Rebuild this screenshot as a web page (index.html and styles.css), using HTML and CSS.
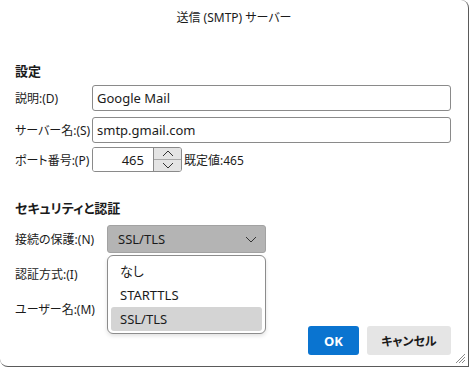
FILE: index.html
```html
<!DOCTYPE html>
<html lang="ja">
  <head>
    <meta charset="UTF-8" />
    <title>送信 (SMTP) サーバー</title>
    <link rel="stylesheet" href="styles.css">
  </head>
  <body>
    <div class="dialog">
      <div class="title">送信 (SMTP) サーバー</div>

      <div class="content">
        <div class="section-head first">設定</div>

        <div class="row r1">
          <label class="label">説明:(D)</label>
          <input class="field" type="text" value="Google Mail" />
        </div>
        <div class="row r2">
          <label class="label">サーバー名:(S)</label>
          <input class="field" type="text" value="smtp.gmail.com" />
        </div>
        <div class="row r3">
          <label class="label">ポート番号:(P)</label>
          <div class="port">
            <input class="field port-input" type="text" value="465" />
            <div class="spin">
              <div class="spin-btn">
                <svg width="12" height="7" viewBox="0 0 12 7"><path d="M1 6 L6 1 L11 6" fill="none" stroke="#333" stroke-width="1"/></svg>
              </div>
              <div class="spin-btn">
                <svg width="12" height="7" viewBox="0 0 12 7"><path d="M1 1 L6 6 L11 1" fill="none" stroke="#333" stroke-width="1"/></svg>
              </div>
            </div>
          </div>
          <span class="default">既定値:465</span>
        </div>

        <div class="section-head second">セキュリティと認証</div>

        <div class="row r4">
          <label class="label wide">接続の保護:(N)</label>
          <div class="select-wrap">
            <div class="select">
              <span>SSL/TLS</span>
              <svg width="12" height="7" viewBox="0 0 12 7"><path d="M1 1 L6 6 L11 1" fill="none" stroke="#333" stroke-width="1"/></svg>
            </div>
            <div class="menu">
              <div class="menu-item">なし</div>
              <div class="menu-item">STARTTLS</div>
              <div class="menu-item selected">SSL/TLS</div>
            </div>
          </div>
        </div>
        <div class="row r5">
          <label class="label">認証方式:(I)</label>
        </div>
        <div class="row r6">
          <label class="label">ユーザー名:(M)</label>
        </div>

        <div class="buttons">
          <button class="btn ok">OK</button>
          <button class="btn cancel">キャンセル</button>
        </div>
      </div>

      <svg class="grip" width="12" height="12" viewBox="0 0 12 12">
        <path d="M11 2 L2 11 M11 5 L5 11 M11 8 L8 11" stroke="#8a8a8a" stroke-width="1"/>
      </svg>
    </div>
  </body>
</html>
```

FILE: styles.css
```css
body {
  margin: 0;
  background: #fff;
  font-family: "Noto Sans", "Noto Sans CJK JP", sans-serif;
  font-size: 12px;
  color: #1b1b1b;
  font-feature-settings: "palt";
}

.dialog {
  position: relative;
  width: 468px;
  height: 366px;
  background: #fff;
  border-right: 1px solid #5a5a5a;
  border-bottom: 1px solid #5a5a5a;
  border-radius: 0 8px 0 8px;
  box-sizing: content-box;
}

.title {
  height: 36px;
  line-height: 36px;
  text-align: center;
}

.content {
  padding: 0 17px 0 15px;
}

.section-head {
  font-weight: bold;
  font-size: 13px;
  line-height: 20px;
}
.section-head.first {
  margin-top: 25px;
}
.section-head.second {
  margin-top: 26px;
}

.row {
  display: flex;
  align-items: center;
}
.r1 { margin-top: 4px; height: 26px; }
.r2 { margin-top: 6px; height: 26px; }
.r3 { margin-top: 4px; height: 25px; }
.r4 { margin-top: 7px; height: 28px; }
.r5 { margin-top: 8px; height: 26px; }
.r6 { margin-top: 9px; height: 26px; }

.label {
  width: 77px;
  flex-shrink: 0;
  white-space: nowrap;
}
.label.wide {
  width: 92px;
}

.field {
  flex: 1;
  height: 100%;
  box-sizing: border-box;
  border: 1px solid #8a8a8a;
  border-radius: 3px;
  padding: 0 4px;
  font-family: inherit;
  font-size: 13px;
  color: #1b1b1b;
  outline: none;
}

.port {
  display: flex;
  height: 100%;
  width: 90px;
  border: 1px solid #8a8a8a;
  border-radius: 3px;
  box-sizing: border-box;
  overflow: hidden;
}
.port-input {
  flex: none;
  width: 60px;
  border: none;
  border-radius: 0;
  text-align: right;
  padding-right: 9px;
}
.spin {
  flex: 1;
  display: flex;
  flex-direction: column;
  border-left: 1px solid #8a8a8a;
}
.spin-btn {
  flex: 1;
  display: flex;
  align-items: center;
  justify-content: center;
  background: #e4e4e4;
}
.spin-btn + .spin-btn {
  border-top: 1px solid #a8a8a8;
}

.default {
  margin-left: 2px;
}

.select-wrap {
  position: relative;
  width: 159px;
  height: 100%;
}
.select {
  height: 100%;
  box-sizing: border-box;
  display: flex;
  align-items: center;
  justify-content: space-between;
  padding: 0 8px 0 10px;
  background: #b4b4b4;
  border: 1px solid #a2a2a2;
  border-radius: 3px;
  font-size: 13px;
}

.menu {
  position: absolute;
  top: 30px;
  left: 0;
  width: 159px;
  box-sizing: border-box;
  padding: 3px 3px 2px;
  background: #fff;
  border: 1px solid #8c8c8c;
  border-radius: 6px;
  box-shadow: 0 2px 4px rgba(0, 0, 0, 0.12);
  font-size: 13px;
  z-index: 2;
}
.menu-item {
  height: 24px;
  line-height: 24px;
  padding-left: 9px;
  border-radius: 3px;
}
.menu-item.selected {
  background: #d4d4d4;
}

.buttons {
  display: flex;
  justify-content: flex-end;
  gap: 8px;
  margin-top: 4px;
}
.btn {
  height: 29px;
  border: none;
  border-radius: 3px;
  font-family: inherit;
  font-size: 12px;
  font-weight: bold;
  font-feature-settings: "palt";
}
.btn.ok {
  width: 51px;
  background: #0a74d0;
  color: #fff;
  font-size: 13px;
}
.btn.cancel {
  width: 84px;
  background: #e5e5e5;
  color: #1b1b1b;
}

.grip {
  position: absolute;
  right: 2px;
  bottom: 2px;
}
```
